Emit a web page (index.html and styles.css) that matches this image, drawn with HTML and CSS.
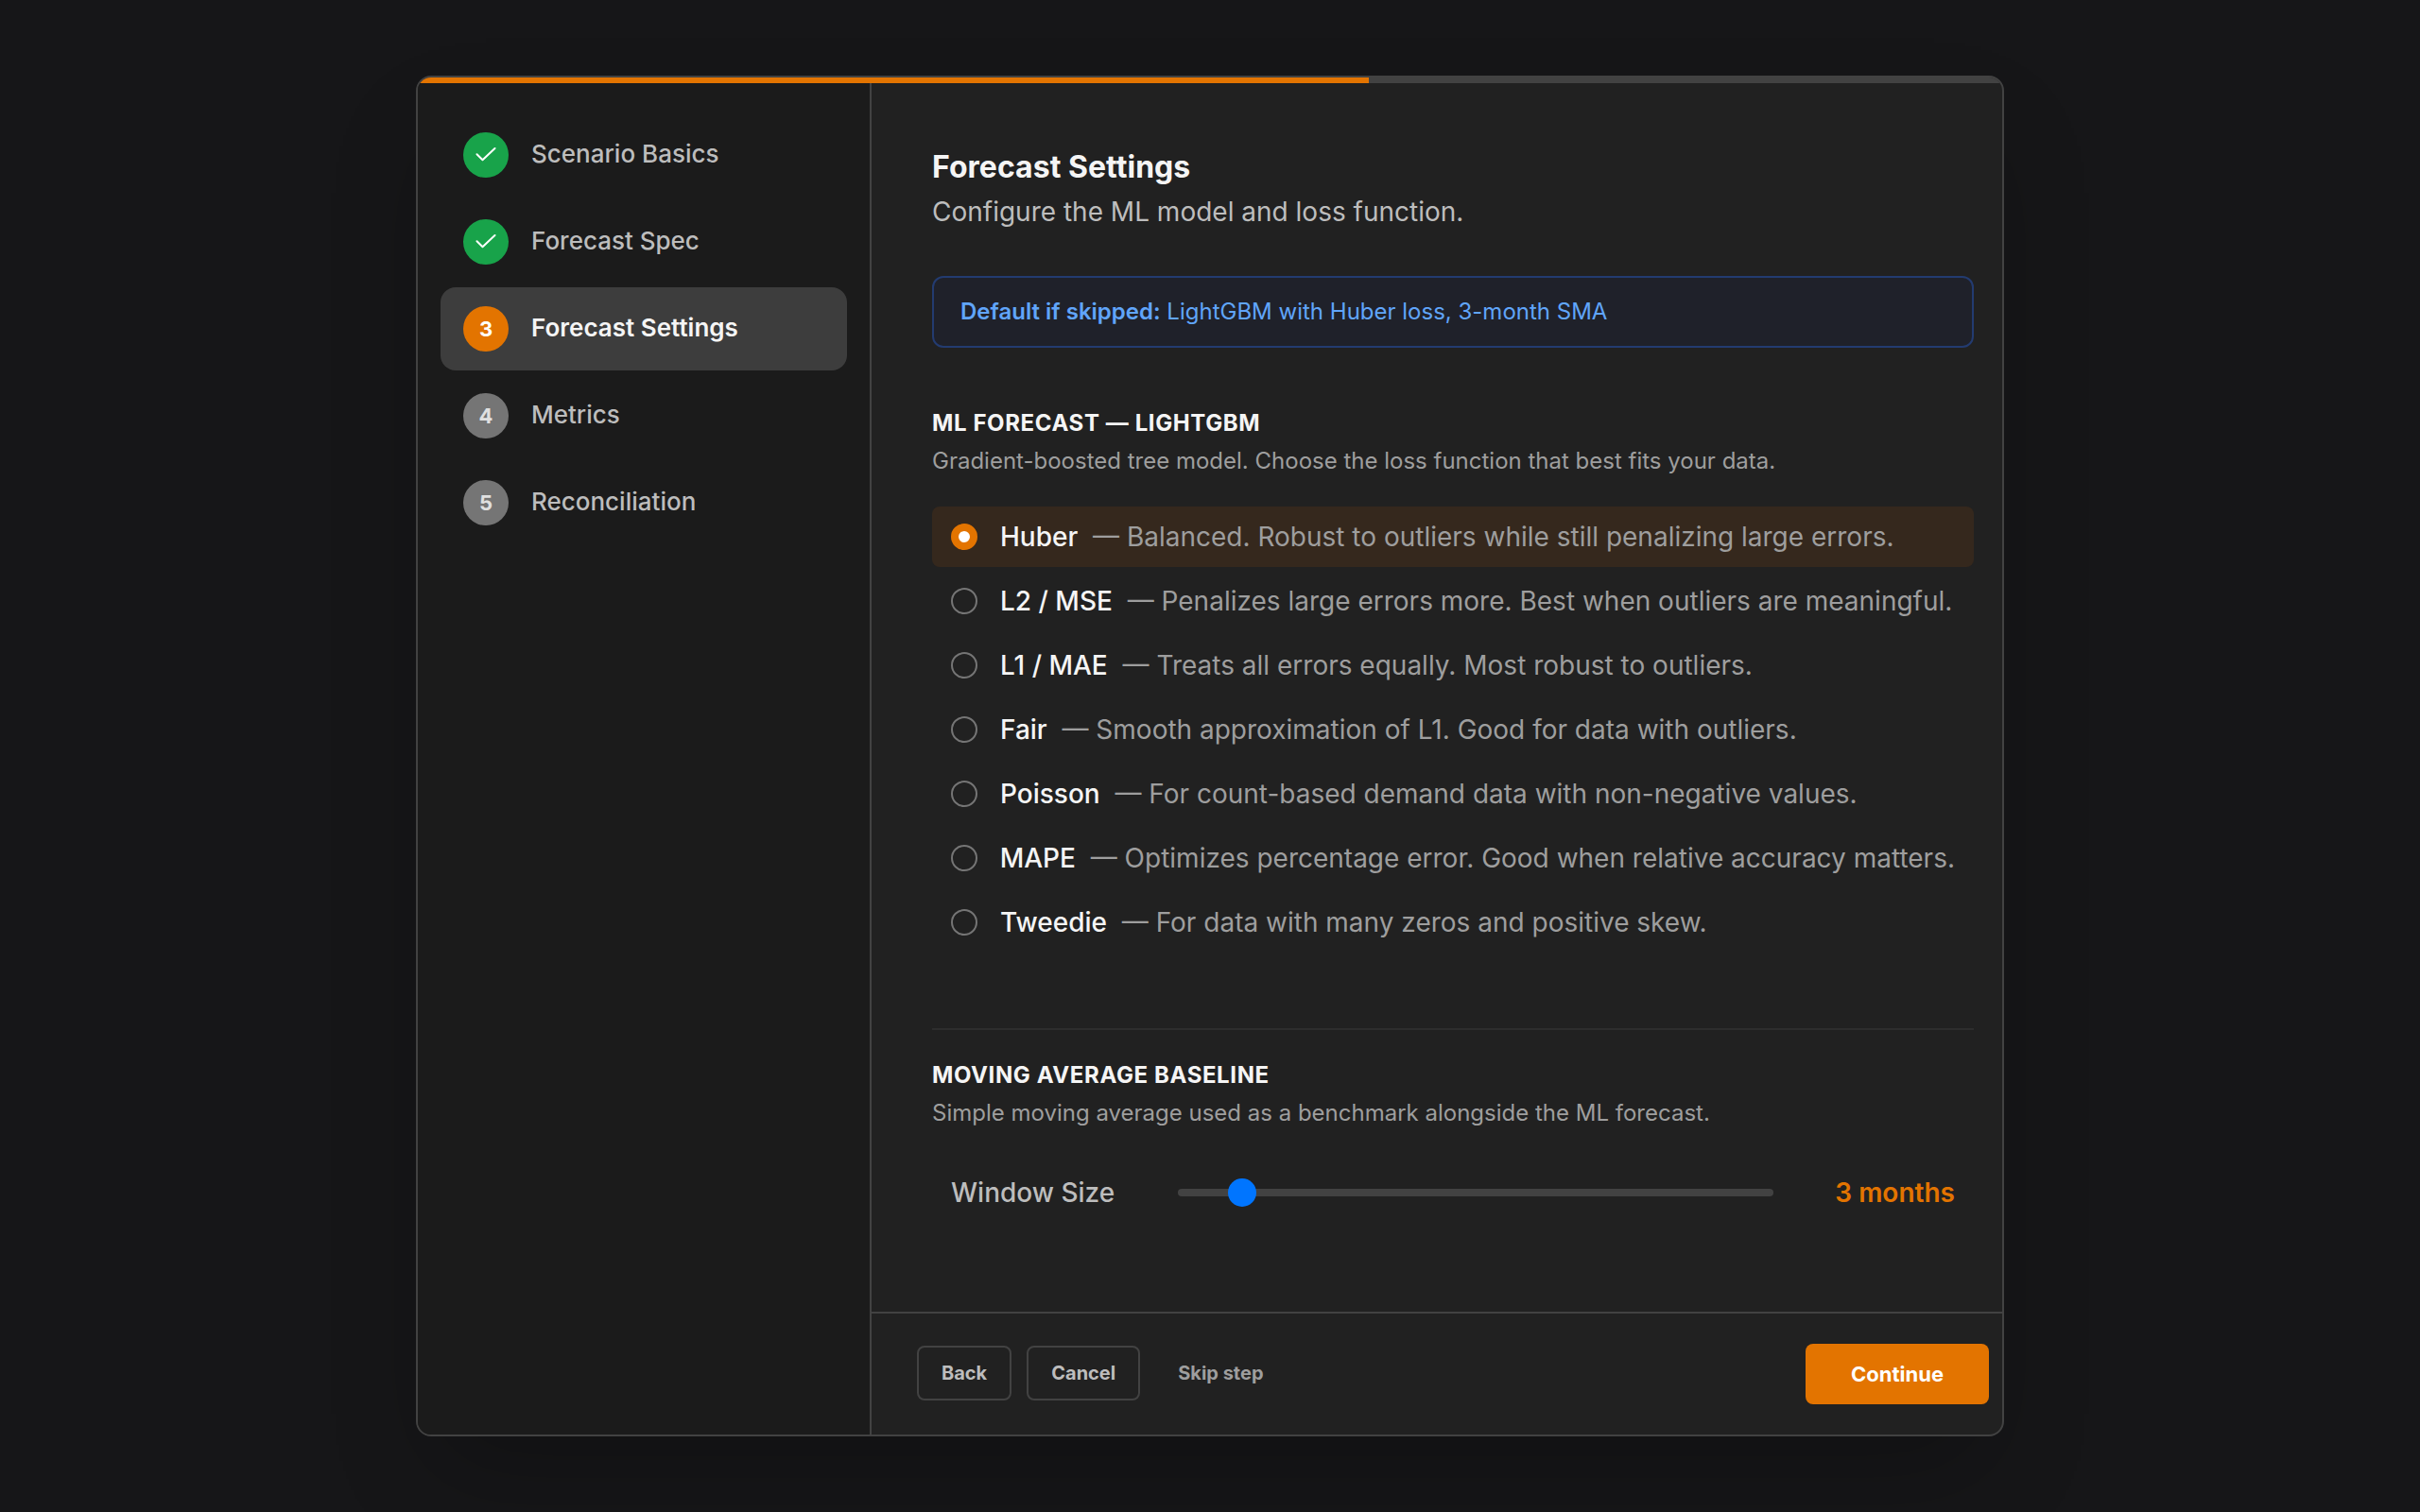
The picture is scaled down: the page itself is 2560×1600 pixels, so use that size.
FILE: index.html
```
<!DOCTYPE html>
<html lang="en">
<head>
<meta charset="utf-8">
<title>Forecast Settings</title>
<link rel="stylesheet" href="styles.css">
</head>
<body>
<div class="modal">
  <div class="progress"><div class="progress-fill" style="width:60%"></div></div>
  <div class="columns">
    <nav class="steps">
      <div class="step"><span class="badge done"><svg viewBox="0 0 48 48"><path d="M14.5 23.2L20.5 29.2L33.5 17"/></svg></span><span class="step-label">Scenario Basics</span></div>
      <div class="step"><span class="badge done"><svg viewBox="0 0 48 48"><path d="M14.5 23.2L20.5 29.2L33.5 17"/></svg></span><span class="step-label">Forecast Spec</span></div>
      <div class="step active"><span class="badge">3</span><span class="step-label">Forecast Settings</span></div>
      <div class="step"><span class="badge">4</span><span class="step-label">Metrics</span></div>
      <div class="step"><span class="badge">5</span><span class="step-label">Reconciliation</span></div>
    </nav>
    <main class="main">
      <div class="content">
        <h1 class="title">Forecast Settings</h1>
        <p class="subtitle">Configure the ML model and loss function.</p>
        <div class="notice"><strong>Default if skipped:</strong> LightGBM with Huber loss, 3-month SMA</div>
        <section class="section">
          <h2 class="section-title">ML FORECAST — LIGHTGBM</h2>
          <p class="section-desc">Gradient-boosted tree model. Choose the loss function that best fits your data.</p>
          <div class="options">
            <div class="option selected"><span class="radio"></span><span class="name">Huber</span><span class="desc">— Balanced. Robust to outliers while still penalizing large errors.</span></div>
            <div class="option"><span class="radio"></span><span class="name">L2 / MSE</span><span class="desc">— Penalizes large errors more. Best when outliers are meaningful.</span></div>
            <div class="option"><span class="radio"></span><span class="name">L1 / MAE</span><span class="desc">— Treats all errors equally. Most robust to outliers.</span></div>
            <div class="option"><span class="radio"></span><span class="name">Fair</span><span class="desc">— Smooth approximation of L1. Good for data with outliers.</span></div>
            <div class="option"><span class="radio"></span><span class="name">Poisson</span><span class="desc">— For count-based demand data with non-negative values.</span></div>
            <div class="option"><span class="radio"></span><span class="name">MAPE</span><span class="desc">— Optimizes percentage error. Good when relative accuracy matters.</span></div>
            <div class="option"><span class="radio"></span><span class="name">Tweedie</span><span class="desc">— For data with many zeros and positive skew.</span></div>
          </div>
        </section>
        <section class="section baseline">
          <h2 class="section-title">MOVING AVERAGE BASELINE</h2>
          <p class="section-desc">Simple moving average used as a benchmark alongside the ML forecast.</p>
          <div class="window">
            <label class="window-label" for="window">Window Size</label>
            <input class="slider" id="window" type="range" min="1" max="24" value="3">
            <span class="window-value">3 months</span>
          </div>
        </section>
      </div>
      <footer class="footer">
        <button class="btn">Back</button>
        <button class="btn">Cancel</button>
        <button class="btn ghost">Skip step</button>
        <button class="btn primary">Continue</button>
      </footer>
    </main>
  </div>
</div>
</body>
</html>
```
FILE: styles.css
```
* { box-sizing: border-box; margin: 0; padding: 0; }
body {
  height: 1600px;
  display: flex;
  align-items: center;
  justify-content: center;
  background: #161618;
  font-family: Inter, "Liberation Sans", sans-serif;
  color: #f5f5f5;
  overflow: hidden;
}
.modal {
  width: 1680px;
  height: 1440px;
  display: flex;
  flex-direction: column;
  border: 2px solid #424242;
  border-radius: 16px;
  background: #212121;
  overflow: hidden;
  box-shadow: 0 50px 100px -24px rgba(0, 0, 0, .25);
}
.progress { height: 6px; background: #424242; }
.progress-fill { height: 100%; background: #e37400; }
.columns { flex: 1; display: flex; min-height: 0; }
.steps {
  width: 480px;
  padding: 32px 24px;
  display: flex;
  flex-direction: column;
  gap: 4px;
  background: #1b1b1b;
  border-right: 2px solid #424242;
}
.step {
  height: 88px;
  padding: 0 24px;
  display: flex;
  align-items: center;
  gap: 24px;
  border-radius: 16px;
  font-size: 26px;
  font-weight: 500;
  color: #bdbdbd;
}
.step.active { background: #3d3d3d; color: #f5f5f5; font-weight: 600; }
.step-label { padding-bottom: 3px; }
.badge {
  width: 48px;
  height: 48px;
  display: flex;
  align-items: center;
  justify-content: center;
  border-radius: 50%;
  background: #757575;
  color: #e0e0e0;
  font-size: 22px;
  font-weight: 700;
}
.badge.done { background: #18a34a; }
.active .badge { background: #e37400; color: #fff; }
.badge svg { width: 48px; height: 48px; fill: none; stroke: #fff; stroke-width: 2; stroke-linecap: round; stroke-linejoin: round; }
.main { flex: 1; min-width: 0; display: flex; flex-direction: column; }
.content { flex: 1; padding: 65px 30px 0 64px; }
.title { font-size: 32px; line-height: 48px; font-weight: 700; letter-spacing: .03px; }
.subtitle { margin-top: 3px; font-size: 28px; line-height: 40px; color: #bdbdbd; }
.notice {
  height: 76px;
  margin-top: 48px;
  padding: 0 28px;
  border: 2px solid #233b70;
  border-radius: 12px;
  background: #1f212a;
  color: #60a5fa;
  font-size: 24px;
  line-height: 72px;
}
.notice strong { font-weight: 600; }
.section { padding-top: 62px; }
.section-title { font-size: 24px; line-height: 36px; font-weight: 700; letter-spacing: .025em; }
.section-desc { margin-top: 4px; font-size: 24px; line-height: 36px; color: #9e9e9e; }
.options { margin-top: 30px; display: flex; flex-direction: column; gap: 4px; }
.option {
  height: 64px;
  padding: 0 20px;
  display: flex;
  align-items: center;
  border-radius: 8px;
  font-size: 28px;
  white-space: nowrap;
}
.option.selected { background: #35281d; }
.radio { width: 28px; height: 28px; margin-right: 24px; border: 2px solid #757575; border-radius: 50%; }
.selected .radio { border: 8px solid #e37400; background: #fff; }
.name { font-weight: 500; }
.desc { margin-left: 15.8px; color: #9e9e9e; }
.baseline { margin-top: 80px; padding-top: 30px; border-top: 2px solid #2d2d2d; }
.window { height: 64px; margin-top: 34px; padding: 0 20px; display: flex; align-items: center; font-size: 28px; }
.window-label { width: 240px; font-weight: 500; color: #bdbdbd; }
.slider { width: 630px; height: 8px; border-radius: 4px; background: #424242; appearance: none; }
.slider::-webkit-slider-thumb { appearance: none; width: 32px; height: 32px; border: 1px solid transparent; border-radius: 50%; background: #0075ff; background-clip: padding-box; }
.window-value { flex: 1; text-align: right; font-weight: 600; color: #e37400; }
.footer {
  height: 130px;
  padding: 0 14px 0 48px;
  display: flex;
  align-items: center;
  gap: 16px;
  border-top: 2px solid #424242;
}
.btn {
  height: 58px;
  margin-bottom: 2px;
  padding: 0 24px;
  border: 2px solid #424242;
  border-radius: 8px;
  background: none;
  color: #bdbdbd;
  font: 700 20px Inter, "Liberation Sans", sans-serif;
}
.btn.ghost { border: 0; color: #9e9e9e; }
.btn.primary { height: 64px; margin: 0 0 0 auto; padding: 0 48px; border: 0; background: #e37400; color: #fff; font-size: 22px; }
```
